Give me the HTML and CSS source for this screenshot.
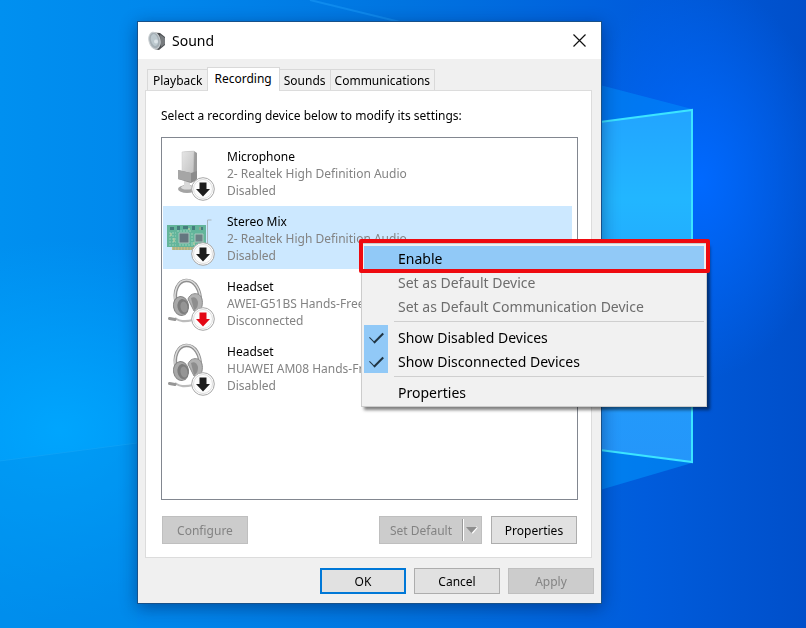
FILE: index.html
```html
<!DOCTYPE html>
<html lang="en">
<head>
    <meta charset="UTF-8">
    <meta name="viewport" content="width=device-width, initial-scale=1.0">
    <title>Sound</title>
    <link rel="stylesheet" href="styles.css">
</head>
<body>
    <!-- Desktop wallpaper -->
    <svg class="wallpaper" viewBox="0 0 806 628" preserveAspectRatio="none" aria-hidden="true">
        <defs>
            <linearGradient id="sky" x1="0" y1="0" x2="1" y2="0">
                <stop offset="0" stop-color="#0090f0"/>
                <stop offset="0.2" stop-color="#0087ec"/>
                <stop offset="0.5" stop-color="#0074e0"/>
                <stop offset="0.8" stop-color="#005cdc"/>
                <stop offset="1" stop-color="#004fca"/>
            </linearGradient>
            <radialGradient id="leftGlow" cx="0.5" cy="0.5" r="0.5">
                <stop offset="0" stop-color="#00a8ff" stop-opacity="0.9"/>
                <stop offset="1" stop-color="#00a8ff" stop-opacity="0"/>
            </radialGradient>
            <radialGradient id="rightGlow" cx="0.5" cy="0.5" r="0.5">
                <stop offset="0" stop-color="#0069ff"/>
                <stop offset="1" stop-color="#0069ff" stop-opacity="0"/>
            </radialGradient>
            <linearGradient id="pane" x1="0" y1="0" x2="0" y2="1">
                <stop offset="0" stop-color="#22a4ff"/>
                <stop offset="0.25" stop-color="#22b6ff"/>
                <stop offset="0.7" stop-color="#229cfc"/>
                <stop offset="1" stop-color="#2496fa"/>
            </linearGradient>
        </defs>
        <rect width="806" height="628" fill="url(#sky)"/>
        <ellipse cx="60" cy="430" rx="230" ry="190" fill="url(#leftGlow)"/>
        <ellipse cx="700" cy="180" rx="130" ry="200" fill="url(#rightGlow)"/>
        <path d="M0 461 137 443V628H0Z" fill="#008de9" fill-opacity="0.35"/>
        <path d="M0 461 137 443" stroke="#18a8f8" stroke-opacity="0.5"/>
        <path d="M310 0 400 22" stroke="#1c9cf8" stroke-opacity="0.5" stroke-width="2"/>
        <path d="M600 85 692 109 600 122Z" fill="#009cff" fill-opacity="0.4"/>
        <path d="M600 450 692 463 600 490Z" fill="#009cff" fill-opacity="0.5"/>
        <path d="M600 122 692 110V462L600 450Z" fill="url(#pane)"/>
        <path d="M600 122 692 110V462L600 450" fill="none" stroke="#3ce4ff" stroke-width="2"/>
    </svg>

    <!-- Shared icon shapes -->
    <svg class="sprites" aria-hidden="true">
        <defs>
            <linearGradient id="metal" x1="0" y1="0" x2="1" y2="1">
                <stop offset="0" stop-color="#e6e6e6"/>
                <stop offset="1" stop-color="#c0c0c0"/>
            </linearGradient>
            <symbol id="badge" viewBox="0 0 24 24">
                <circle cx="12" cy="12" r="11.3" fill="#fff" stroke="#a6a6a6"/>
                <circle cx="12" cy="12" r="9.5" fill="#fcfcfc" stroke="#dedede"/>
                <path d="M8.500 5.500h7v6.500h3.500L12 19.500 5 12h3.500Z" fill="currentColor"/>
            </symbol>
            <symbol id="headset" viewBox="0 0 48 48">
                <path d="M9.500 27C6 14 11 4 19 3.500c9-.5 14.500 9 14.500 22" fill="none" stroke="#8e8e8e" stroke-width="3.500"/>
                <path d="M8.700 26C6 14 11 3.500 19 3c8-.4 14 8 14.500 20" fill="none" stroke="#dcdcdc" stroke-width="1.500"/>
                <path d="M21 22c2-5 6-6 10-5 4 2 5 7 4 12-1 4-4 6-8 5Z" fill="#b2b2b2" stroke="#8c8c8c"/>
                <path d="M24 21c3-2 6 0 7 4 0 4-1 7-4 8Z" fill="#8e8e8e"/>
                <ellipse cx="14" cy="29" rx="7.500" ry="9.500" fill="#a8a8a8" stroke="#858585" transform="rotate(-10 14 29)"/>
                <ellipse cx="16" cy="29.500" rx="5.500" ry="7.500" fill="#7c7c7c" transform="rotate(-10 16 29.500)"/>
                <ellipse cx="17" cy="30" rx="3.500" ry="5.500" fill="#959595" transform="rotate(-10 17 30)"/>
                <path d="M8 41c5 4 10 4 18 2" fill="none" stroke="#bcbcbc" stroke-width="2"/>
                <path d="M2.500 41.500 8 42.500" stroke="#969696" stroke-width="3" stroke-linecap="round"/>
            </symbol>
        </defs>
    </svg>

    <main class="desktop">
        <!-- Sound dialog -->
        <section class="dialog" role="dialog" aria-labelledby="dialogTitle">
            <header class="titlebar">
                <svg class="title-icon" viewBox="0 0 18 20" aria-hidden="true">
                    <path d="M6 1.500 12 2l5 4v8l-6 5-5-1Z" fill="#4c4f52"/>
                    <path d="M12 3.500 17 7v6l-4 3Z" fill="#777b7e"/>
                    <ellipse cx="6.500" cy="9.500" rx="5.500" ry="8.500" fill="#a5afb5" stroke="#c9ced1" transform="rotate(-14 6.500 9.500)"/>
                    <ellipse cx="6.500" cy="9" rx="3.500" ry="6" fill="#bcc8ce" transform="rotate(-14 6.500 9)"/>
                    <circle cx="8" cy="10.500" r="2" fill="#dce4e8"/>
                </svg>
                <h1 class="title" id="dialogTitle">Sound</h1>
                <button class="close" type="button" aria-label="Close">
                    <svg viewBox="0 0 13 13" aria-hidden="true"><path d="M.5.5l12 12M12.500.5l-12 12" stroke="#111" stroke-width="1.200"/></svg>
                </button>
            </header>

            <div class="dialog-body">
                <div class="tabs" role="tablist">
                    <button class="tab" type="button" role="tab">Playback</button>
                    <button class="tab tab-active" type="button" role="tab" aria-selected="true">Recording</button>
                    <button class="tab" type="button" role="tab">Sounds</button>
                    <button class="tab" type="button" role="tab">Communications</button>
                </div>

                <div class="panel" role="tabpanel">
                    <p class="hint">Select a recording device below to modify its settings:</p>

                    <ul class="devices">
                        <li class="device">
                            <div class="device-icon">
                                <svg viewBox="0 0 48 48" aria-hidden="true">
                                    <ellipse cx="20" cy="42" rx="9" ry="4" fill="#a4a4a4"/>
                                    <path d="M17 32h6v9h-6Z" fill="#dadada"/>
                                    <ellipse cx="20" cy="40.500" rx="6" ry="2" fill="#dadada"/>
                                    <path d="m15 5 12-1 3 2v23l-5 2-10-4Z" fill="#9c9c9c"/>
                                    <path d="m15 5 12-1-1 25-11-2Z" fill="url(#metal)" stroke="#c8c8c8" stroke-width=".5"/>
                                    <path d="m11 23 13 3 6-2v9l-6 3-13-4Z" fill="#8c8c8c"/>
                                    <path d="m11 23 13 3v9l-13-3Z" fill="#a6a6a6"/>
                                </svg>
                                <svg class="badge" aria-hidden="true"><use href="#badge"/></svg>
                            </div>
                            <div class="device-text">
                                <h2>Microphone</h2>
                                <p>2- Realtek High Definition Audio</p>
                                <p>Disabled</p>
                            </div>
                        </li>
                        <li class="device device-selected">
                            <div class="device-icon">
                                <svg viewBox="0 0 48 48" aria-hidden="true">
                                    <path d="M40.500 34V8h4" fill="none" stroke="#a9b5bd"/>
                                    <path d="M0 13h39v22H0Z" fill="#63b59b"/>
                                    <path d="M5 35h24v3H5Z" fill="#c6bd83"/>
                                    <path d="M7 35v3m3-3v3m3-3v3m3-3v3m3-3v3m3-3v3m3-3v3" stroke="#8fa98d"/>
                                    <path d="M12 21h10v10H12Z" fill="#64777f" stroke="#a9c7bd"/>
                                    <path d="M28 22h8v8h-8Z" fill="#6b8286" stroke="#a9c7bd"/>
                                    <path d="M3 15h4v3H3Zm7-1h3v4h-3Zm6 0h5v3h-5Zm9 0h3v4h-3Zm7 1h4v3h-4Z" fill="#457d7c"/>
                                    <path d="M2 21h7M2 24h7M2 27h7M2 30h7M2 33h7M25 21v12M10 19h14M12 33h16" stroke="#9bd2ba" stroke-dasharray="2 1"/>
                                    <path d="M4 21v3m3 2v4m15-14v2m5 12v3m6-18v3" stroke="#d9d8a6"/>
                                </svg>
                                <svg class="badge" aria-hidden="true"><use href="#badge"/></svg>
                            </div>
                            <div class="device-text">
                                <h2>Stereo Mix</h2>
                                <p>2- Realtek High Definition Audio</p>
                                <p>Disabled</p>
                            </div>
                        </li>
                        <li class="device">
                            <div class="device-icon">
                                <svg aria-hidden="true"><use href="#headset"/></svg>
                                <svg class="badge badge-red" aria-hidden="true"><use href="#badge"/></svg>
                            </div>
                            <div class="device-text">
                                <h2>Headset</h2>
                                <p>AWEI-G51BS Hands-Free</p>
                                <p>Disconnected</p>
                            </div>
                        </li>
                        <li class="device">
                            <div class="device-icon">
                                <svg aria-hidden="true"><use href="#headset"/></svg>
                                <svg class="badge" aria-hidden="true"><use href="#badge"/></svg>
                            </div>
                            <div class="device-text">
                                <h2>Headset</h2>
                                <p>HUAWEI AM08 Hands-Free</p>
                                <p>Disabled</p>
                            </div>
                        </li>
                    </ul>

                    <div class="panel-actions">
                        <button class="btn configure" type="button" disabled>Configure</button>
                        <div class="split">
                            <button class="split-main" type="button" disabled>Set Default</button>
                            <button class="split-arrow" type="button" aria-label="More defaults" disabled>
                                <svg viewBox="0 0 12 8" aria-hidden="true">
                                    <path d="m6 7 5-6" stroke="#fff" stroke-width="2"/>
                                    <path d="M0 1h11L5.500 7Z" fill="#8e8e8e"/>
                                </svg>
                            </button>
                        </div>
                        <button class="btn" type="button">Properties</button>
                    </div>
                </div>

                <footer class="dialog-actions">
                    <button class="btn btn-default" type="button">OK</button>
                    <button class="btn" type="button">Cancel</button>
                    <button class="btn" type="button" disabled>Apply</button>
                </footer>
            </div>
        </section>

        <!-- Right-click menu -->
        <div class="menu" role="menu">
            <button class="menu-item menu-item-active" type="button" role="menuitem">Enable</button>
            <button class="menu-item" type="button" role="menuitem" disabled>Set as Default Device</button>
            <button class="menu-item" type="button" role="menuitem" disabled>Set as Default Communication Device</button>
            <hr>
            <div class="menu-check">
                <input type="checkbox" id="showDisabled" checked>
                <label for="showDisabled">Show Disabled Devices</label>
            </div>
            <div class="menu-check">
                <input type="checkbox" id="showDisconnected" checked>
                <label for="showDisconnected">Show Disconnected Devices</label>
            </div>
            <hr>
            <button class="menu-item" type="button" role="menuitem">Properties</button>
            <span class="highlight"></span>
        </div>
    </main>
</body>
</html>
```

FILE: styles.css
```css
* {
    box-sizing: border-box;
}

body {
    margin: 0;
    background-color: #0078e0;
    font-family: "Noto Sans", "Open Sans", sans-serif;
    font-size: 12px;
    color: #000;
}

h1, h2, p, ul {
    margin: 0;
    padding: 0;
    font-size: inherit;
    font-weight: normal;
}

button {
    padding: 0;
    border: none;
    font: inherit;
    color: inherit;
}

/* Desktop */
.wallpaper {
    position: fixed;
    top: 0;
    left: 0;
    width: 100%;
    height: 100%;
}

.sprites {
    position: absolute;
    width: 0;
    height: 0;
}

.desktop {
    position: relative;
    padding: 21px 204px 24px 137px;
}

/* Dialog */
.dialog {
    border: 1px solid #17518a;
    background-color: #f0f0f0;
    box-shadow: 0 4px 16px rgba(0, 20, 70, 0.45);
}

.titlebar {
    display: flex;
    align-items: center;
    height: 37px;
    padding: 0 15px 0 10px;
    background-color: #fff;
}

.title-icon {
    width: 18px;
    height: 20px;
}

.title {
    flex: 1;
    margin-left: 6px;
    font-size: 14px;
}

.close {
    display: flex;
    background: none;
}

.close svg {
    width: 13px;
    height: 13px;
}

.dialog-body {
    padding: 8px 7px 9px;
}

/* Tabs */
.tabs {
    display: flex;
    align-items: flex-end;
    height: 23px;
    padding-left: 2px;
}

.tab {
    height: 21px;
    padding: 0 4px;
    border: 1px solid #d9d9d9;
    border-left: none;
    border-bottom: none;
    background-color: #f0f0f0;
}

.tab:first-child {
    padding-left: 5px;
    border-left: 1px solid #d9d9d9;
}

.tab-active {
    position: relative;
    height: 24px;
    margin: 0 0 -1px -1px;
    padding: 0 7px 2px;
    border-left: 1px solid #d9d9d9;
    background-color: #fff;
}

.panel {
    margin-right: 2px;
    padding: 15px 13px 13px 15px;
    border: 1px solid #dcdcdc;
    background-color: #fff;
}

.hint {
    line-height: 20px;
}

/* Device list */
.devices {
    min-height: 363px;
    margin-top: 11px;
    padding: 3px 5px 3px 1px;
    border: 1px solid #828790;
    list-style: none;
}

.device {
    display: flex;
    height: 63px;
    margin-bottom: 2px;
    padding: 6px 4px;
}

.device-selected {
    background-color: #cce8ff;
}

.device-icon {
    position: relative;
    width: 48px;
    height: 48px;
    margin-right: 12px;
}

.device-icon svg {
    display: block;
    width: 48px;
    height: 48px;
}

.device-icon .badge {
    position: absolute;
    right: 0;
    bottom: -6px;
    width: 24px;
    height: 24px;
    color: #1c1c1c;
}

.device-icon .badge-red {
    color: #e30613;
}

.device-text {
    padding-top: 1px;
    line-height: 17px;
}

.device-text p {
    color: #838383;
}

/* Buttons */
.btn {
    width: 86px;
    height: 26px;
    border: 1px solid #adadad;
    background-color: #e1e1e1;
}

.btn:disabled,
.split {
    border-color: #bfbfbf;
    background-color: #ccc;
    color: #838383;
}

.btn-default {
    border: 2px solid #0078d7;
}

.panel-actions {
    display: flex;
    gap: 9px;
    margin: 16px 1px 0;
}

.panel-actions .btn {
    height: 28px;
}

.panel-actions .configure {
    margin-right: auto;
}

.split {
    display: flex;
    align-items: center;
    width: 103px;
    height: 28px;
    border: 1px solid #bfbfbf;
}

.split button {
    background: none;
    color: inherit;
}

.split-main {
    flex: 1;
}

.split-arrow {
    display: flex;
    align-items: center;
    justify-content: center;
    width: 19px;
    height: 22px;
    border-left: 1px solid #999;
    box-shadow: inset 1px 0 #fff;
}

.split-arrow svg {
    width: 12px;
    height: 8px;
}

.dialog-actions {
    display: flex;
    justify-content: flex-end;
    gap: 8px;
    margin-top: 10px;
}

/* Context menu */
.menu {
    position: absolute;
    top: 243px;
    left: 361px;
    width: 346px;
    padding: 2px;
    border: 1px solid #ccc;
    background-color: #f1f1f1;
    box-shadow: 3px 3px 3px rgba(0, 0, 0, 0.5);
    font-size: 14px;
    line-height: 24px;
}

.menu-item {
    display: block;
    width: 100%;
    height: 24px;
    padding: 1px 0 0 34px;
    background: none;
    text-align: left;
}

.menu-item:disabled {
    color: #6d6d6d;
}

.menu-item-active {
    background-color: #91c9f7;
}

.menu hr {
    margin: 3px 0 3px 30px;
    border: none;
    border-top: 1px solid #cfcfcf;
}

.menu-check {
    display: flex;
    gap: 10px;
    height: 24px;
}

.menu-check label {
    padding-top: 1px;
}

.menu-check input {
    width: 24px;
    height: 24px;
    margin: 0;
    appearance: none;
    background-color: #91c9f7;
}

/* tick mark */
.menu-check input:checked::before {
    content: "";
    display: block;
    width: 12px;
    height: 6px;
    margin: 7px 6px;
    border-left: 1px solid #1f3442;
    border-bottom: 2px solid #1f3442;
    transform: rotate(-45deg);
}

/* red frame over the first item */
.highlight {
    position: absolute;
    top: -5px;
    left: -3px;
    right: -4px;
    height: 34px;
    border: 4px solid #ee0a10;
    border-radius: 2px;
}
```
